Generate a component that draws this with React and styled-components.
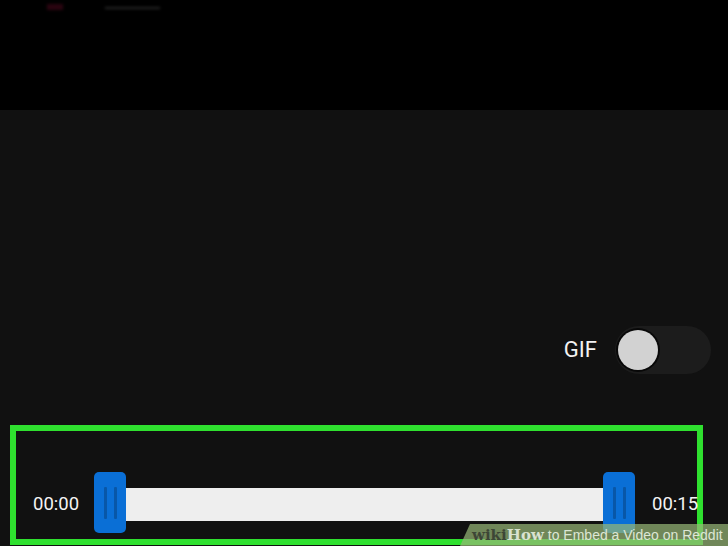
import React from "react";
import styled, { createGlobalStyle } from "styled-components";

const Global = createGlobalStyle`
  html, body { margin: 0; padding: 0; background: #000; }
  body { font-family: Roboto, "Liberation Sans", sans-serif; }
  #root { width: 728px; height: 546px; overflow: hidden; }
`;

const Page = styled.div`
  position: relative;
  width: 728px;
  height: 546px;
  display: flex;
  flex-direction: column;
  background: #111111;
`;

const TopArea = styled.div`
  height: 110px;
  background: #000;
  position: relative;
`;

const Smudge = styled.div`
  position: absolute;
  left: ${(p) => p.$x}px;
  top: ${(p) => p.$y}px;
  width: ${(p) => p.$w}px;
  height: ${(p) => p.$h}px;
  background: ${(p) => p.$c};
  filter: blur(1.5px);
`;

const Main = styled.div`
  flex: 1;
  display: flex;
  flex-direction: column;
  padding-top: 216px;
`;

const ToggleRow = styled.div`
  display: flex;
  justify-content: flex-end;
  align-items: center;
  gap: 18px;
  padding-right: 17px;
  height: 48px;
`;

const ToggleLabel = styled.span`
  color: #f2f2f2;
  font-size: 22px;
  line-height: 1;
  font-family: Roboto, sans-serif;
`;

const Track = styled.div`
  width: 96px;
  height: 48px;
  border-radius: 24px;
  background: #1c1c1c;
  display: flex;
  align-items: center;
  padding-left: 3px;
  box-sizing: border-box;
`;

const Knob = styled.div`
  width: 40px;
  height: 40px;
  border-radius: 50%;
  background: #d2d2d2;
  box-shadow: 0 0 0 2px #080808;
`;

const SelectBox = styled.div`
  margin: 51px 0 0 10px;
  width: 693px;
  height: 120px;
  box-sizing: border-box;
  border: 6px solid #2fe02f;
  display: flex;
  align-items: flex-end;
  padding: 0 0 6px 17px;
`;

const SliderRow = styled.div`
  display: flex;
  align-items: center;
  height: 61px;
  width: 100%;
`;

const Time = styled.span`
  color: #f4f4f4;
  font-size: 18.5px;
  font-family: Roboto, sans-serif;
  width: 45px;
  margin-top: 3px;
  white-space: nowrap;
`;

const Handle = styled.div`
  width: 32px;
  height: 61px;
  border-radius: 5px;
  background: #0a6fd6;
  display: flex;
  align-items: center;
  justify-content: center;
  gap: 7px;
  flex-shrink: 0;
  margin: ${(p) => (p.$side === "left" ? "0 0 0 16px" : "0 17px 0 0")};
`;

const Grip = styled.div`
  width: 3px;
  height: 32px;
  background: #0857a8;
  border-radius: 1px;
`;

const Range = styled.div`
  flex: 1;
  height: 33px;
  background: #eeeeee;
  margin-top: 4px;
`;

const Watermark = styled.div`
  position: absolute;
  right: 0;
  bottom: 0;
  width: 268px;
  height: 22px;
  background: rgba(150, 182, 118, 0.72);
  clip-path: polygon(10px 0, 100% 0, 100% 100%, 0 100%);
  display: flex;
  align-items: center;
  padding-left: 12px;
  box-sizing: border-box;
  white-space: nowrap;
`;

const Wiki = styled.span`
  font-family: "DejaVu Serif", "Liberation Serif", serif;
  font-weight: bold;
  font-size: 15px;
  color: #3d4636;
`;

const How = styled.span`
  font-family: "DejaVu Serif", "Liberation Serif", serif;
  font-weight: bold;
  font-size: 15px;
  color: #d9e2d0;
  margin-right: 4px;
`;

const Title = styled.span`
  font-family: "Liberation Sans", Arial, sans-serif;
  font-size: 14px;
  color: #dde6d4;
`;

export default function App() {
  return (
    <>
      <Global />
      <Page>
        <TopArea>
          <Smudge $x={47} $y={4} $w={16} $h={6} $c="#2a0410" />
          <Smudge $x={105} $y={7} $w={55} $h={2} $c="#262626" />
        </TopArea>
        <Main>
          <ToggleRow>
            <ToggleLabel>GIF</ToggleLabel>
            <Track>
              <Knob />
            </Track>
          </ToggleRow>
          <SelectBox>
            <SliderRow>
              <Time>00:00</Time>
              <Handle $side="left">
                <Grip />
                <Grip />
              </Handle>
              <Range />
              <Handle $side="right">
                <Grip />
                <Grip />
              </Handle>
              <Time>00:15</Time>
            </SliderRow>
          </SelectBox>
        </Main>
        <Watermark>
          <Wiki>wiki</Wiki>
          <How>How</How>
          <Title>to Embed a Video on Reddit</Title>
        </Watermark>
      </Page>
    </>
  );
}
